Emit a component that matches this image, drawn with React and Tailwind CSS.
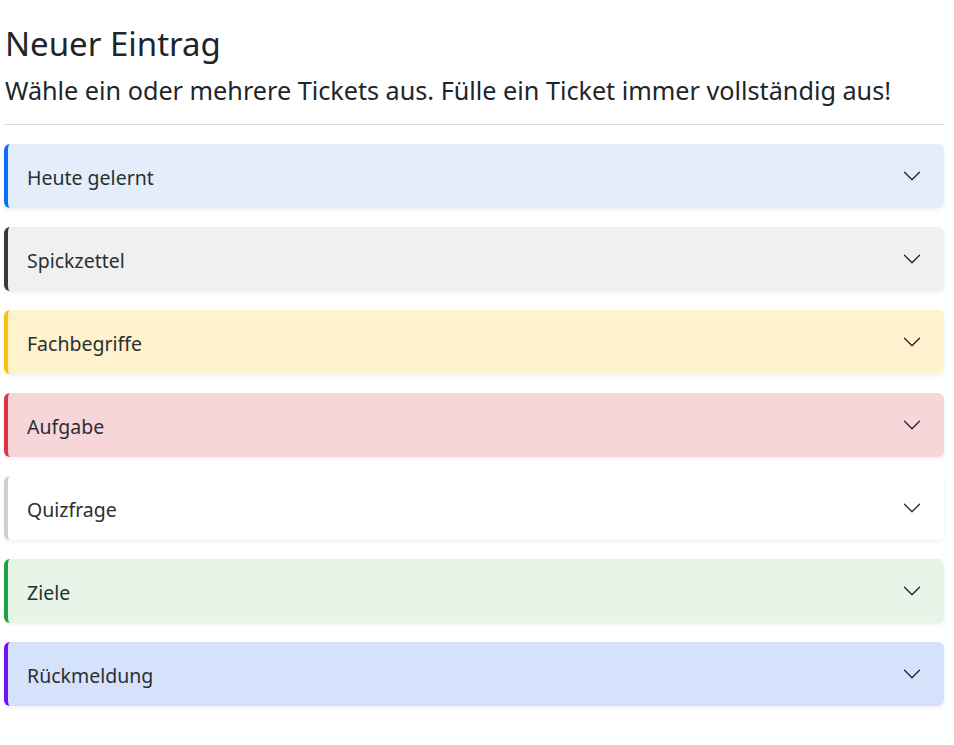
import React from 'react';

const tickets = [
    { title: 'Heute gelernt', cls: 'bg-[#e4eefa] border-[#0d6efd]' },
    { title: 'Spickzettel', cls: 'bg-[#f0f0f0] border-[#343a40]' },
    { title: 'Fachbegriffe', cls: 'bg-[#fff2cc] border-[#ffc107]' },
    { title: 'Aufgabe', cls: 'bg-[#f7d6da] border-[#dc3545]' },
    { title: 'Quizfrage', cls: 'bg-white border-[#cfcfcf]' },
    { title: 'Ziele', cls: 'bg-[#e7f4e8] border-[#1fa045]' },
    { title: 'Rückmeldung', cls: 'bg-[#d5e2fc] border-[#6f10f5]' },
];

const Chevron = () => (
    <svg width="20" height="20" viewBox="0 0 16 16" fill="#212529">
        <path
            fillRule="evenodd"
            d="M1.646 4.646a.5.5 0 0 1 .708 0L8 10.293l5.646-5.647a.5.5 0 0 1 .708.708l-6 6a.5.5 0 0 1-.708 0l-6-6a.5.5 0 0 1 0-.708z"
        />
    </svg>
);

const App = () => {
    return (
        <div className="min-h-screen bg-white text-[#212529] font-['Noto_Sans','Open_Sans',sans-serif] pl-1 pr-[10px] pt-6">
            <h2 className="text-[33px] leading-[40px] font-normal ml-px">Neuer Eintrag</h2>
            <h4 className="text-[25.2px] leading-[30px] font-normal mt-[11px] ml-px">
                Wähle ein oder mehrere Tickets aus. Fülle ein Ticket immer vollständig aus!
            </h4>
            <hr className="border-0 border-t border-[#dcdcdc] mt-[19px] mb-[19px]" />

            <div className="flex flex-col gap-[19px]">
                {tickets.map((t) => (
                    <div
                        key={t.title}
                        className={`h-16 flex items-center justify-between rounded-[6px] border-l-4 pl-[19px] pr-[22px] shadow-[0_2px_4px_rgba(0,0,0,0.06)] ${t.cls}`}
                    >
                        <span className="pt-1 text-[19.5px] text-[#2b2f33]">{t.title}</span>
                        <Chevron />
                    </div>
                ))}
            </div>
        </div>
    );
};

export default App;
